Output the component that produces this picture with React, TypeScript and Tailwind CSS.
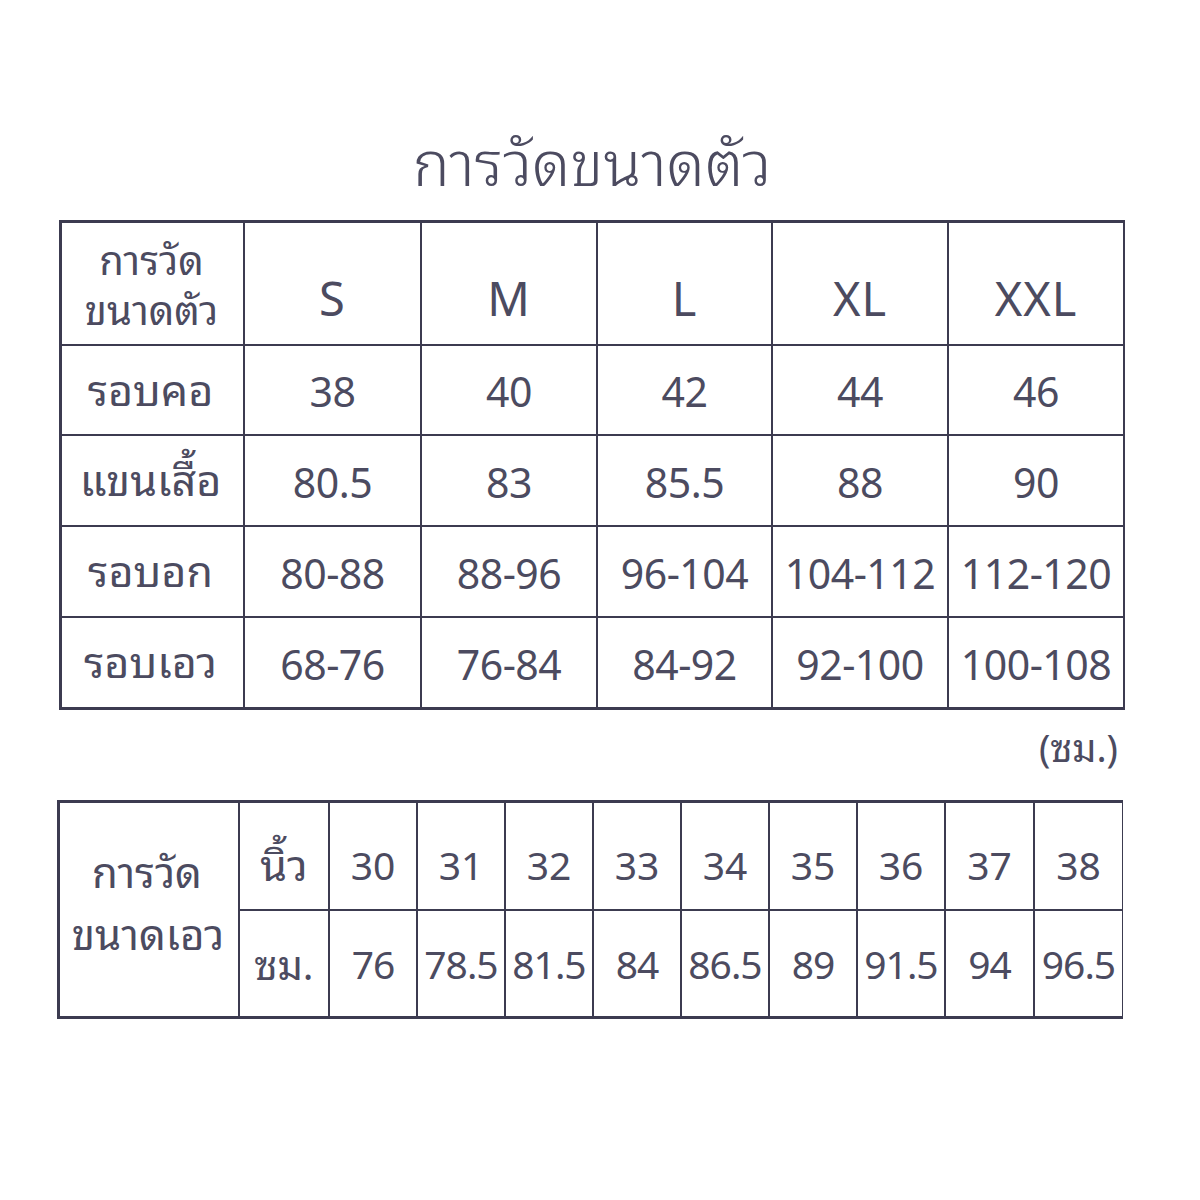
const sizes = ["S", "M", "L", "XL", "XXL"]

const rows = [
  { label: "รอบคอ", values: ["38", "40", "42", "44", "46"] },
  { label: "แขนเสื้อ", values: ["80.5", "83", "85.5", "88", "90"] },
  { label: "รอบอก", values: ["80-88", "88-96", "96-104", "104-112", "112-120"] },
  { label: "รอบเอว", values: ["68-76", "76-84", "84-92", "92-100", "100-108"] },
]

const inches = ["30", "31", "32", "33", "34", "35", "36", "37", "38"]
const cms = ["76", "78.5", "81.5", "84", "86.5", "89", "91.5", "94", "96.5"]

const cell = "bg-white flex items-center justify-center"

export default function App() {
  return (
    <div
      className="w-[1200px] h-[1200px] bg-white text-[#4c4b60] font-normal pt-[124px]"
      style={{ fontFamily: '"Noto Sans", "Noto Sans Thai Looped", "Noto Sans Thai", sans-serif' }}
    >
      {/* หัวเรื่อง */}
      <div className="text-[62px] font-light leading-[76px] text-center mr-[16px]">การวัดขนาดตัว</div>

      {/* ตารางขนาดตัว */}
      <div className="ml-[59px] mt-[20px] w-[1066px] bg-[#3c3b50] p-[3px] grid grid-cols-[181px_175px_174px_173px_174px_174px] grid-rows-[121px_88px_89px_89px_89px] gap-[2px]">
        <div className={`${cell} flex-col text-[40px] leading-[50px] pt-[2px] pr-[2px]`}>
          <span>การวัด</span>
          <span>ขนาดตัว</span>
        </div>
        {sizes.map((s) => (
          <div key={s} className={`${cell} text-[47px] tracking-[1px] pt-[30px]`}>
            {s}
          </div>
        ))}
        {rows.map((r) => (
          <>
            <div key={r.label} className={`${cell} text-[43px] pr-[4px]`}>
              {r.label}
            </div>
            {r.values.map((v, i) => (
              <div key={r.label + i} className={`${cell} text-[41px] tracking-[-0.5px] pt-[4px]`}>
                {v}
              </div>
            ))}
          </>
        ))}
      </div>

      <div className="w-[1118px] text-right text-[38px] leading-[50px] mt-[12px]">(ซม.)</div>

      {/* ตารางขนาดเอว */}
      <div className="ml-[57px] mt-[28px] w-[1066px] bg-[#3c3b50] p-[3px] grid grid-cols-[178px_88px_86px_86px_86px_86px_86px_86px_86px_87px_87px] grid-rows-[106px_105px] gap-[2px]">
        <div className="bg-white row-span-2 flex flex-col items-center justify-center text-[42px] leading-[62px] pb-[14px]">
          <span className="pr-[4px]">การวัด</span>
          <span className="pr-[2px]">ขนาดเอว</span>
        </div>
        <div className={`${cell} text-[43px] pt-[18px]`}>นิ้ว</div>
        {inches.map((v) => (
          <div key={v} className={`${cell} text-[39px] pt-[18px]`}>
            {v}
          </div>
        ))}
        <div className={`${cell} text-[40px] pt-[2px]`}>ซม.</div>
        {cms.map((v) => (
          <div key={v} className={`${cell} text-[39px] tracking-[-1px] pt-[2px]`}>
            {v}
          </div>
        ))}
      </div>
    </div>
  )
}
